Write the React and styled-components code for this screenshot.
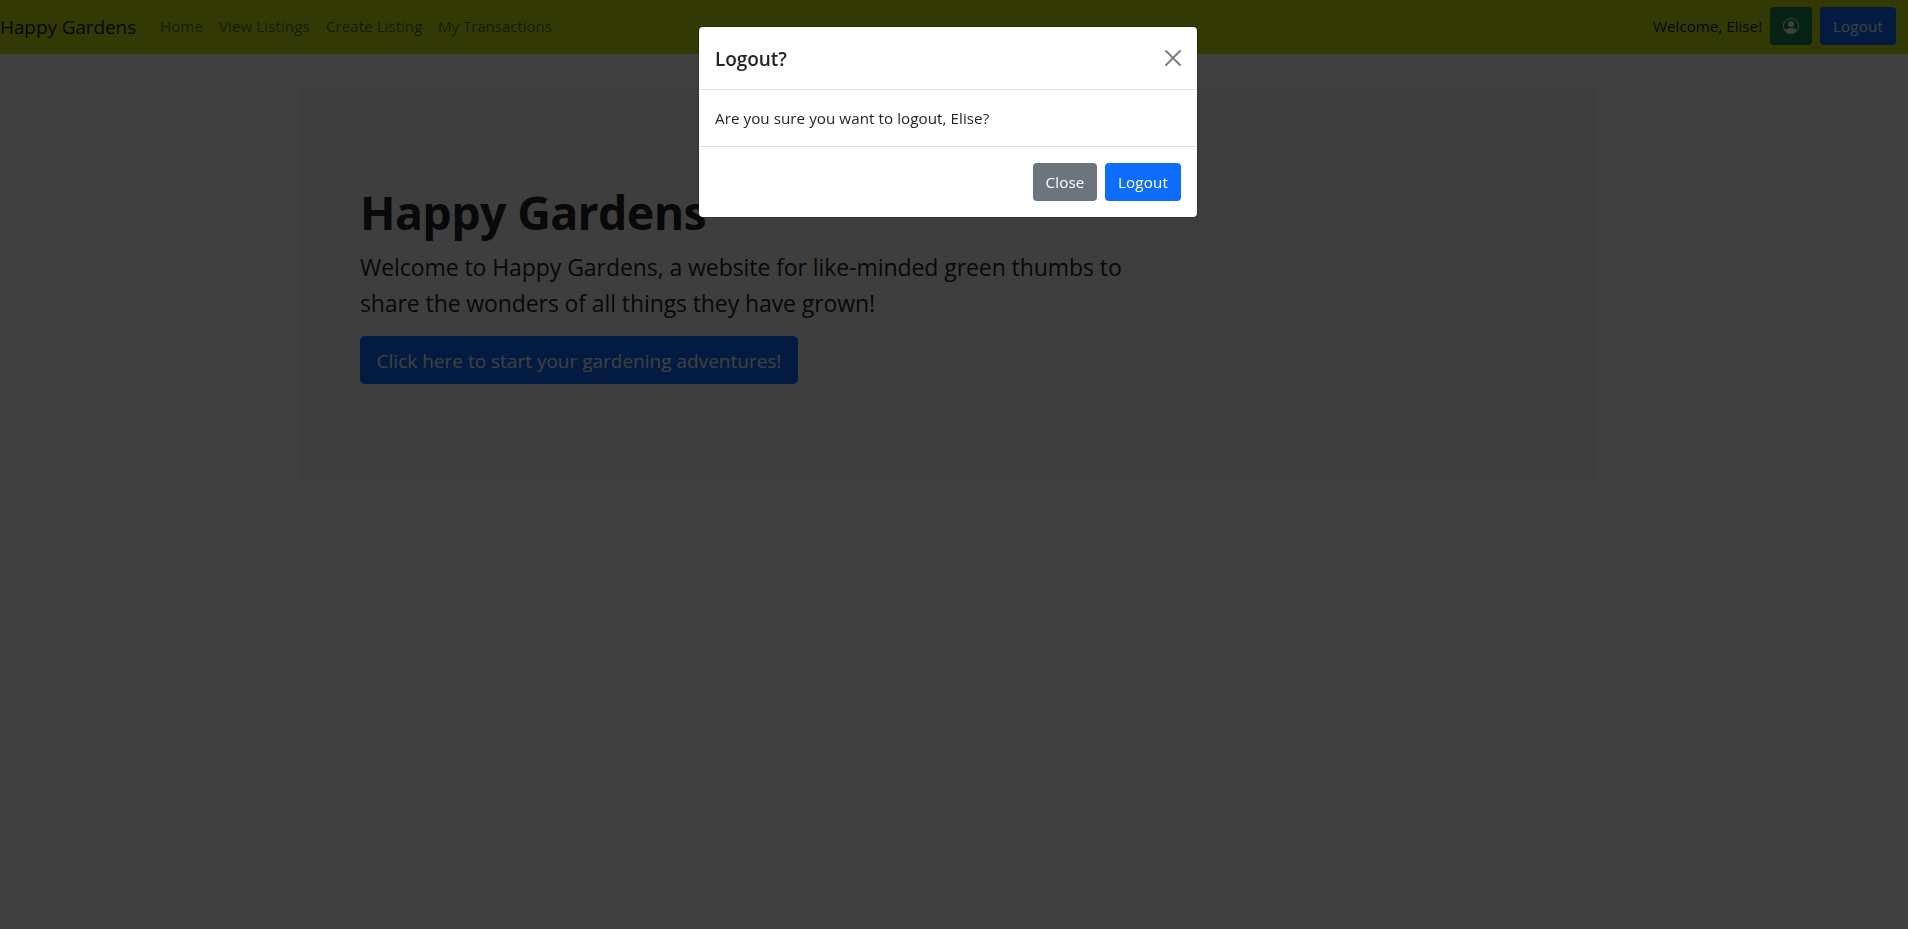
import React from "react";
import styled, { createGlobalStyle, css } from "styled-components";

const GlobalStyle = createGlobalStyle`
  *, *::before, *::after { box-sizing: border-box; }
  body {
    margin: 0;
    min-height: 100vh;
    overflow: hidden;
    background: #fff;
    color: #212529;
    font-family: "Segoe UI", "Open Sans", "Noto Sans", sans-serif;
    font-size: 15.2px;
    line-height: 24px;
  }
`;

const Navbar = styled.nav`
  display: flex;
  align-items: center;
  height: 54px;
  padding: 0 12px 2px 0;
  background: #c8e414;
`;

const Brand = styled.a`
  margin-right: 16px;
  padding-top: 1px;
  width: 144px;
  color: rgba(0, 0, 0, 0.9);
  font-size: 19px;
  line-height: 30px;
  letter-spacing: ${(p) => p.$tracking};
  white-space: nowrap;
`;

const NavLinks = styled.div`
  display: flex;
  flex: 1;
`;

const NavLink = styled.a`
  width: ${(p) => p.$width}px;
  color: rgba(0, 0, 0, 0.55);
  letter-spacing: ${(p) => p.$tracking};
  white-space: nowrap;
`;

const Account = styled.div`
  display: flex;
  align-items: center;
  gap: 8px;
`;

const Welcome = styled.span`
  width: 109px;
  letter-spacing: ${(p) => p.$tracking};
  white-space: nowrap;
`;

const tones = {
  primary: "#0d6efd",
  secondary: "#6c757d",
  success: "#198754",
};

const Button = styled.button`
  display: inline-flex;
  align-items: center;
  justify-content: center;
  width: ${(p) => p.$width}px;
  height: 38px;
  padding: 0;
  border: 0;
  border-radius: 4px;
  background: ${(p) => tones[p.$tone]};
  color: #fff;
  font: inherit;
  letter-spacing: ${(p) => p.$tracking || "0.15px"};
  white-space: nowrap;
  ${(p) =>
    p.$large &&
    css`
      height: 48px;
      padding-top: 2px;
      border-radius: 4.8px;
      font-size: 19px;
      line-height: 30px;
    `}
`;

const Main = styled.main`
  width: 1296px;
  margin: 32px 0 0 300px;
`;

const Hero = styled.section`
  height: 394px;
  padding: 98px 60px 94px;
  border-radius: 4.8px;
  background: #f8f8f8;
`;

const HeroTitle = styled.h1`
  margin: 0 0 7px;
  font-size: 46.5px;
  font-weight: 700;
  line-height: 57.6px;
  letter-spacing: ${(p) => p.$tracking};
`;

const Lead = styled.p`
  margin: 0 0 15px;
  font-size: 23px;
  line-height: 36px;
`;

const LeadLine = styled.span`
  display: block;
  letter-spacing: ${(p) => p.$tracking};
  white-space: nowrap;
`;

const Backdrop = styled.div`
  position: fixed;
  inset: 0;
  padding: 26px 12px 0 0;
  background: rgba(0, 0, 0, 0.75);
`;

const Dialog = styled.div`
  width: 500px;
  margin: 0 auto;
  border: 1px solid rgba(0, 0, 0, 0.2);
  border-radius: 4.8px;
  background: #fff;
  background-clip: padding-box;
`;

const DialogHeader = styled.header`
  display: flex;
  align-items: center;
  justify-content: space-between;
  height: 63px;
  padding: 0 16px;
  border-bottom: 1px solid #dee2e6;
`;

const DialogTitle = styled.h5`
  margin: 0;
  padding-top: 2px;
  font-size: 19px;
  font-weight: 600;
  line-height: 30px;
  letter-spacing: ${(p) => p.$tracking};
`;

const CloseButton = styled.button`
  display: flex;
  padding: 0;
  border: 0;
  background: none;
  opacity: 0.5;
`;

const DialogBody = styled.div`
  padding: 16px;
  letter-spacing: ${(p) => p.$tracking};
`;

const DialogFooter = styled.footer`
  display: flex;
  justify-content: flex-end;
  gap: 8px;
  padding: 16px;
  border-top: 1px solid #dee2e6;
`;

const PersonIcon = () => (
  <svg width="16" height="16" viewBox="0 0 16 16" fill="currentColor">
    <path d="M11 6a3 3 0 1 1-6 0 3 3 0 0 1 6 0z" />
    <path
      fillRule="evenodd"
      d="M0 8a8 8 0 1 1 16 0A8 8 0 0 1 0 8zm8-7a7 7 0 0 0-5.468 11.37C3.242 11.226 4.805 10 8 10s4.757 1.225 5.468 2.37A7 7 0 0 0 8 1z"
    />
  </svg>
);

const CrossIcon = () => (
  <svg width="16" height="16" viewBox="0 0 16 16" fill="#000">
    <path d="M.293.293a1 1 0 0 1 1.414 0L8 6.586 14.293.293a1 1 0 1 1 1.414 1.414L9.414 8l6.293 6.293a1 1 0 0 1-1.414 1.414L8 9.414l-6.293 6.293a1 1 0 0 1-1.414-1.414L6.586 8 .293 1.707a1 1 0 0 1 0-1.414z" />
  </svg>
);

const links = [
  { label: "Home", width: 59, tracking: "0px" },
  { label: "View Listings", width: 107, tracking: "0.04px" },
  { label: "Create Listing", width: 112, tracking: "0px" },
  { label: "My Transactions", width: 130, tracking: "-0.1px" },
];

export default function App() {
  return (
    <>
      <GlobalStyle />
      <Navbar>
        <Brand $tracking="-0.1px">Happy Gardens</Brand>
        <NavLinks>
          {links.map((l) => (
            <NavLink key={l.label} $width={l.width} $tracking={l.tracking}>
              {l.label}
            </NavLink>
          ))}
        </NavLinks>
        <Account>
          <Welcome $tracking="0px">Welcome, Elise!</Welcome>
          <Button $tone="success" $width={42} aria-label="Account">
            <PersonIcon />
          </Button>
          <Button $tone="primary" $width={76}>Logout</Button>
        </Account>
      </Navbar>
      <Main>
        <Hero>
          <HeroTitle $tracking="-0.65px">Happy Gardens</HeroTitle>
          <Lead>
            <LeadLine $tracking="-0.07px">
              Welcome to Happy Gardens, a website for like-minded green thumbs to
            </LeadLine>
            <LeadLine $tracking="-0.1px">
              share the wonders of all things they have grown!
            </LeadLine>
          </Lead>
          <Button $tone="primary" $width={438} $large $tracking="0px">
            Click here to start your gardening adventures!
          </Button>
        </Hero>
      </Main>
      <Backdrop>
        <Dialog role="dialog" aria-modal="true">
          <DialogHeader>
            <DialogTitle $tracking="-0.05px">Logout?</DialogTitle>
            <CloseButton aria-label="Close">
              <CrossIcon />
            </CloseButton>
          </DialogHeader>
          <DialogBody $tracking="0.05px">Are you sure you want to logout, Elise?</DialogBody>
          <DialogFooter>
            <Button $tone="secondary" $width={64}>Close</Button>
            <Button $tone="primary" $width={76}>Logout</Button>
          </DialogFooter>
        </Dialog>
      </Backdrop>
    </>
  );
}
